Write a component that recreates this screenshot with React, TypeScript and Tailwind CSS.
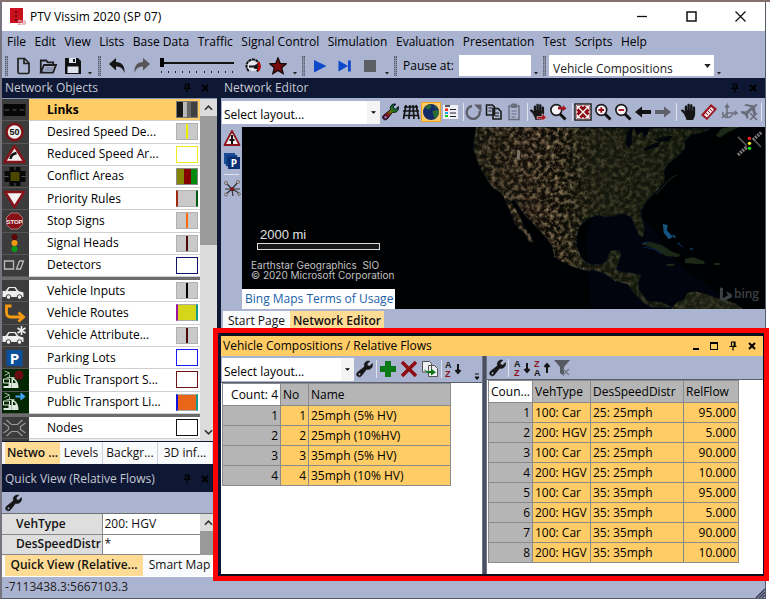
import React from "react";

type IconProps = { children: React.ReactNode; className?: string };

function Svg({ children, className = "size-[18px]" }: IconProps) {
  return (
    <svg viewBox="0 0 18 18" className={`shrink-0 ${className}`} fill="none" aria-hidden="true">
      {children}
    </svg>
  );
}

const wrenchPath =
  "M16.4 3.6 13.6 6.2 11.4 5.6 11.2 3.8 13.8 1.2C11.4.4 8.6 1.8 8.3 4.6c-.1.9 0 1.400.2 2.100L1.600 12.200c-1.300 1.100-1.200 2.900-.2 3.900s2.800 1 3.900-.2l5.300-6.700c2.600 1 6.700-.9 5.800-5.600Z";

function Wrench({ rainbow = false }: { rainbow?: boolean }) {
  return (
    <Svg>
      {rainbow && (
        <defs>
          <linearGradient id="rainbow" x1="0" y1="1" x2="1" y2="0">
            <stop offset="0" stopColor="#201060" />
            <stop offset=".3" stopColor="#8a1020" />
            <stop offset=".5" stopColor="#6a6a00" />
            <stop offset=".7" stopColor="#087a28" />
            <stop offset="1" stopColor="#102080" />
          </linearGradient>
        </defs>
      )}
      <path d={wrenchPath} fill={rainbow ? "url(#rainbow)" : "#151515"} stroke={rainbow ? "#111" : "#151515"} strokeWidth={rainbow ? 1 : 0.6} />
      <circle cx="3.500" cy="14.200" r="1" fill="#aab3d0" />
    </Svg>
  );
}

function IconButton({ label, children, active = false }: { label: string; children: React.ReactNode; active?: boolean }) {
  return (
    <button
      type="button"
      aria-label={label}
      className={
        active
          ? "flex size-[20px] shrink-0 items-center justify-center border border-[#e8a21c] bg-[#ffcc66]"
          : "flex size-[20px] shrink-0 items-center justify-center"
      }
    >
      {children}
    </button>
  );
}

function Grip() {
  return <span className="h-[20px] w-[3px] shrink-0 border-x border-dotted border-[#555a6c] bg-[#8c92a8]" />;
}

function Sep() {
  return <span className="h-[18px] w-px shrink-0 bg-[#dfe3ee]" />;
}

function Overflow() {
  return (
    <svg viewBox="0 0 6 20" className="h-[20px] w-[6px] shrink-0" aria-hidden="true">
      <path d="M1 16h4l-2 2.500Z" fill="#222" />
    </svg>
  );
}

function Pin() {
  return (
    <svg viewBox="0 0 8 10" className="h-[10px] w-[8px]" aria-hidden="true">
      <path d="M2 1h4v4.500M2.500 1v4.500M.5 5.500h7M4 5.500V9.500M5.200 1v4" fill="none" stroke="currentColor" strokeWidth="1.200" />
    </svg>
  );
}

function Cross() {
  return (
    <svg viewBox="0 0 8 8" className="size-[8px]" aria-hidden="true">
      <path d="m1 1 6 6M7 1 1 7" stroke="currentColor" strokeWidth="2" />
    </svg>
  );
}

function PanelHeader({ title, tall = false }: { title: string; tall?: boolean }) {
  return (
    <header
      className={
        tall
          ? "flex h-[26px] items-center bg-[#0e1733] pr-[8px] pl-[3px]"
          : "flex h-[20px] items-center bg-[#0e1733] pr-[8px] pl-[3px]"
      }
    >
      <h2 className="flex-1 truncate text-[12px] text-[#c5c9d4]">{title}</h2>
      <div className="flex items-center gap-[10px] text-black">
        <button type="button" aria-label="Pin panel"><Pin /></button>
        <button type="button" aria-label="Close panel"><Cross /></button>
      </div>
    </header>
  );
}

const menus = ["File", "Edit", "View", "Lists", "Base Data", "Traffic", "Signal Control", "Simulation", "Evaluation", "Presentation", "Test", "Scripts", "Help"];

function LayoutSelect({ id, className }: { id: string; className: string }) {
  return (
    <div className={`relative shrink-0 bg-white ${className}`}>
      <select id={id} aria-label="Select layout" className="h-full w-full appearance-none pb-[4px] pl-[2px] text-[12px] text-black outline-none">
        <option>Select layout...</option>
      </select>
      <span className="pointer-events-none absolute inset-y-0 right-0 flex w-[13px] items-center justify-center bg-[#f4f4f4]">
        <svg viewBox="0 0 6 3" className="h-[3px] w-[5px]" aria-hidden="true"><path d="M0 0h6L3 3Z" fill="#000" /></svg>
      </span>
    </div>
  );
}

function MainToolbar() {
  return (
    <div className="flex h-[25px] items-center bg-[#aab3d0] pl-[3px]">
      <Grip />
      <div className="ml-[5px] flex gap-[5px]">
        <IconButton label="New">
          <Svg><path d="M4 1.500h6.500L15 6v9a1.500 1.500 0 0 1-1.500 1.500h-8A1.500 1.500 0 0 1 4 15Z M10 2v4.500h4.500" stroke="#222" strokeWidth="1.700" /></Svg>
        </IconButton>
        <IconButton label="Open">
          <Svg><path d="M1.800 15.500v-12h5.400l1.500 1.800h5.500v2.500M1.800 15.500 5 8h12l-3 7.500Z" stroke="#1d1d1d" strokeWidth="1.800" /><path d="M4.200 15 7 10h8l-2 5Z" fill="#8f97b2" /></Svg>
        </IconButton>
        <IconButton label="Save">
          <Svg><path d="M1 1h13l3 3v13H1Z" fill="#101010" /><path d="M5 1h7v5H5ZM3.500 9.500h11V16h-11Z" fill="#dfe3ee" /><path d="M9 2h2v3H9Z" fill="#101010" /></Svg>
        </IconButton>
      </div>
      <span className="ml-[4px] flex gap-[5px]"><Overflow /><Grip /></span>
      <div className="ml-[6px] flex gap-[5px]">
        <IconButton label="Undo"><Svg><path d="M1 7 8 1v4c5.500 0 9 3.500 8.500 11C15 11.500 12.500 9.500 8 9.500v4Z" fill="#151515" /></Svg></IconButton>
        <IconButton label="Redo"><Svg><path d="M17 7 10 1v4C4.500 5 1 8.500 1.500 16 3 11.500 5.500 9.500 10 9.500v4Z" fill="#565656" /></Svg></IconButton>
      </div>
      <div className="ml-[8px] flex w-[74px] flex-col gap-[4px]">
        <input
          type="range"
          aria-label="Simulation speed"
          defaultValue={0}
          className="h-[9px] w-full appearance-none bg-[linear-gradient(#111,#111)] bg-[length:100%_2px] bg-center bg-no-repeat [&::-webkit-slider-thumb]:h-[9px] [&::-webkit-slider-thumb]:w-[4px] [&::-webkit-slider-thumb]:appearance-none [&::-webkit-slider-thumb]:bg-black"
        />
        <div className="flex justify-between px-[1px]">
          {Array.from({ length: 11 }, (_, i) => <span key={i} className="h-[2px] w-px bg-[#222]" />)}
        </div>
      </div>
      <div className="ml-[9px] flex gap-[5px]">
        <IconButton label="Maximum speed">
          <Svg><circle cx="9" cy="9" r="6.500" fill="#e6e6ee" stroke="#111" strokeWidth="2" strokeDasharray="3 .6" /><path d="M14 5.500a6.500 6.500 0 0 1 0 8" stroke="#b00" strokeWidth="2.600" /><path d="M5 9.500h5l3-1.500v3l-3-.2" stroke="#111" strokeWidth="1.800" /><path d="M5 14h8v3H5Z" fill="#aab3d0" /></Svg>
        </IconButton>
        <IconButton label="Favourites"><Svg><path d="m9 1 2.200 5.500 5.900.4-4.500 3.800 1.500 5.800L9 13.300l-5.100 3.200 1.500-5.800L.9 6.900l5.900-.4Z" fill="#7c0a0a" stroke="#1a0a0a" strokeWidth="1.400" /></Svg></IconButton>
      </div>
      <span className="ml-[4px] flex gap-[4px]"><Overflow /><Grip /></span>
      <div className="ml-[5px] flex gap-[5px]">
        <IconButton label="Continuous simulation"><Svg><path d="M3 3v12.500L15.500 9Z" fill="#0e49cc" /></Svg></IconButton>
        <IconButton label="Single step"><Svg><path d="M2.500 3.500v11L12 9Z" fill="#0e49cc" /><path d="M12 3.500h2.800v11H12Z" fill="#0e49cc" /></Svg></IconButton>
        <IconButton label="Stop"><Svg><path d="M3 3h12v12H3Z" fill="#5d5f66" /></Svg></IconButton>
      </div>
      <span className="ml-[4px] flex gap-[4px]"><Overflow /><Grip /></span>
      <label htmlFor="pause" className="ml-[6px] w-[56px] text-[12px] text-black">Pause at:</label>
      <input id="pause" type="text" className="h-[21px] w-[72px] bg-white px-1 text-[12px] outline-none" />
      <span className="ml-[2px] flex gap-[4px]"><Overflow /><Grip /></span>
      <div className="relative ml-[3px] h-[21px] w-[165px] bg-white">
        <select aria-label="List window" className="h-full w-full appearance-none pb-[4px] pl-[4px] text-[12px] text-[#222] outline-none">
          <option>Vehicle Compositions</option>
        </select>
        <svg viewBox="0 0 8 5" className="pointer-events-none absolute top-[9px] right-[3px] h-[4px] w-[7px]" aria-hidden="true"><path d="M0 0h8L4 5Z" fill="#222" /></svg>
      </div>
      <span className="ml-[2px] flex"><Overflow /></span>
    </div>
  );
}

const car = "M0 7h3l3-4h7l3 4 5 1.500V13H0Z";

const objectIcons: Record<string, React.ReactNode> = {
  links: <><path d="M1 4h22v12H1Z" fill="#070707" /><path d="M2 10h5M10 10h4M17 10h5" stroke="#555" /></>,
  speed: <><circle cx="12" cy="10" r="8" fill="#eee" stroke="#801015" strokeWidth="2.500" /><text x="12" y="13" textAnchor="middle" fontSize="9" fontWeight="700" fill="#111" fontFamily="Liberation Sans">50</text></>,
  reduced: <><path d="M12 2 22 18H2Z" fill="#eee" stroke="#851318" strokeWidth="2.500" strokeLinejoin="round" /><path d="M8 15c0-3 2-5 6-6" stroke="#111" strokeWidth="2.500" /></>,
  conflict: <><path d="M7 1h11v4h5v11h-5v4H7v-4H2V5h5Z" fill="#080808" /><path d="M8 6h9v9H8Z" fill="#4b4600" /><path d="M12.500 1v3M12.500 17v3M2 10.500h4M19 10.500h4" stroke="#555" /></>,
  priority: <path d="M2.500 3h19L12 18Z" fill="#f2f2f2" stroke="#851318" strokeWidth="2.500" strokeLinejoin="round" />,
  stop: <><path d="M8.500 2h7L20 6.500v7L15.500 18h-7L4 13.500v-7Z" fill="#8b1015" stroke="#c49a9a" strokeWidth=".7" /><text x="12" y="12.500" textAnchor="middle" fontSize="6" fontWeight="700" fill="#eee" fontFamily="Liberation Sans">STOP</text></>,
  signal: <><circle cx="12" cy="4" r="3" fill="#5a0606" /><circle cx="12" cy="10" r="3" fill="#f39a10" /><circle cx="12" cy="16" r="3" fill="#0b9a18" /></>,
  detector: <path d="M2 6h9v8H2ZM14 14l3-8h4l-3 8Z" stroke="#bbb" strokeWidth="1.300" />,
  input: <><path d={car} fill="#eee" transform="translate(0 3)" /><path d="M7 7h5l2 3H5Z" fill="#3c3c3c" /><circle cx="6" cy="16" r="2.300" fill="#eee" stroke="#3c3c3c" /><circle cx="17" cy="16" r="2.300" fill="#eee" stroke="#3c3c3c" /></>,
  route: <path d="M9 3H4v6c0 3 1 5 4 5h12M16 9.500l5 4.500-5 4.500" stroke="#f39a10" strokeWidth="2.800" />,
  attribute: <><path d={car} fill="#eee" transform="translate(0 4)" /><path d="M7 8h5l2 3H5Z" fill="#3c3c3c" /><circle cx="6" cy="17" r="2.300" fill="#eee" stroke="#3c3c3c" /><circle cx="17" cy="17" r="2.300" fill="#eee" stroke="#3c3c3c" /><path d="M19 1v9M15 3l8 5M23 3l-8 5" stroke="#eee" strokeWidth="1.600" /></>,
  parking: <><path d="M4 2h16v16H4Z" fill="#0b509c" /><text x="12" y="15.500" textAnchor="middle" fontSize="15" fontWeight="700" fill="#fff" fontFamily="Open Sans">P</text></>,
  ptstop: <><path d="m2 1 5 2-5 2.500M4 7.500h8M7 4.500v3" stroke="#a8bca8" /><path d="M3 8h8c3.500 2 5 5 5 10H9V8" fill="#dfe8df" /><path d="M1 9h6v4H1ZM10 9.500h1.500c1.500 1 2 2.500 2.300 4H10Z" fill="#032703" stroke="#dfe8df" /><path d="M1 18h8v-5H6v3H1Z" fill="#dfe8df" /><circle cx="16.500" cy="5" r="4.500" fill="#6b0b12" /></>,
  ptline: <><path d="m2 1 5 2-5 2.500M4 7.500h8M7 4.500v3" stroke="#a8bca8" /><path d="M3 8h8c3.500 2 5 5 5 10H9V8" fill="#dfe8df" /><path d="M1 9h6v4H1ZM10 9.500h1.500c1.500 1 2 2.500 2.300 4H10Z" fill="#032703" stroke="#dfe8df" /><path d="M1 18h8v-5H6v3H1Z" fill="#dfe8df" /><path d="M13 4.500h8M18 1.500l3.500 3L18 7.500" stroke="#42a5f5" strokeWidth="2" /></>,
  nodes: <path d="m4 2 5 4.500h6L20 2M4 18l5-4.500h6L20 18M1 5l5 3.500v3L1 15M23 5l-5 3.500v3l5 3.500" stroke="#999" strokeWidth="1.200" />,
};

type NetObject = { name: string; icon: string; swatch: string; mark?: string; bold?: boolean; green?: boolean };

const groups: { heightClass: string; items: NetObject[] }[] = [
  {
    heightClass: "h-[178px]",
    items: [
      { name: "Links", icon: "links", swatch: "bg-[linear-gradient(90deg,#181818_30%,#c0c0c0_30%,#b0b0b0_50%,#666_50%,#666_72%,#404040_72%)] border-[#777]", bold: true },
      { name: "Desired Speed De...", icon: "speed", swatch: "bg-[#c9c9c9] border-[#b0b0b0]", mark: "bg-[#eeee00]" },
      { name: "Reduced Speed Ar...", icon: "reduced", swatch: "bg-white border-[#f0ea20]" },
      { name: "Conflict Areas", icon: "conflict", swatch: "bg-[linear-gradient(90deg,#858500_34%,#850000_34%,#850000_68%,#008a10_68%)] border-[#888]" },
      { name: "Priority Rules", icon: "priority", swatch: "bg-[#c9c9c9] border-y-[#b0b0b0] border-l-2 border-l-[#a02810] border-r-2 border-r-[#005c10]" },
      { name: "Stop Signs", icon: "stop", swatch: "bg-[#c9c9c9] border-[#b0b0b0]", mark: "bg-[#ff6a10]" },
      { name: "Signal Heads", icon: "signal", swatch: "bg-[#c9c9c9] border-[#b0b0b0]", mark: "bg-[#4a0808]" },
      { name: "Detectors", icon: "detector", swatch: "bg-white border-[#10106a]" },
    ],
  },
  {
    heightClass: "h-[134px]",
    items: [
      { name: "Vehicle Inputs", icon: "input", swatch: "bg-[#c9c9c9] border-[#b0b0b0]", mark: "bg-black" },
      { name: "Vehicle Routes", icon: "route", swatch: "bg-[#d5d618] border-y-[#aaa] border-l-2 border-l-[#a010a0] border-r-2 border-r-[#109a90]" },
      { name: "Vehicle Attribute...", icon: "attribute", swatch: "bg-[#c9c9c9] border-[#b0b0b0]", mark: "bg-[#4a0808]" },
      { name: "Parking Lots", icon: "parking", swatch: "bg-white border-[#1818ff]" },
      { name: "Public Transport S...", icon: "ptstop", swatch: "bg-white border-[#6a1515]", green: true },
      { name: "Public Transport Li...", icon: "ptline", swatch: "bg-[#e96518] border-y-[#aaa] border-l-2 border-l-[#1010e0] border-r-2 border-r-[#109a90]", green: true },
    ],
  },
  { heightClass: "h-[22px]", items: [{ name: "Nodes", icon: "nodes", swatch: "bg-white border-[#111]" }] },
];

function Chevron({ down = false }: { down?: boolean }) {
  return (
    <svg viewBox="0 0 10 6" className="h-[6px] w-[9px]" fill="none" aria-hidden="true">
      <path d={down ? "m1 1 4 4 4-4" : "m1 5 4-4 4 4"} stroke="#333" strokeWidth="1.800" />
    </svg>
  );
}

function NetworkObjects() {
  return (
    <div className="flex border-t border-[#8a93ad] bg-[#dcdcdc]">
      <div className="min-w-0 flex-1 bg-[#3c3c3c]">
        {groups.map((group, g) => (
          <ul key={g} className={`grid auto-rows-fr ${group.heightClass} ${g > 0 ? "border-t-[3px] border-[#6c6c6c] box-content" : ""}`}>
            {group.items.map((item) => (
              <li key={item.name} className="min-h-0">
                <button type="button" className="flex h-full w-full text-left text-[12px] text-black">
                  <span className={`flex h-full w-[27px] shrink-0 items-center border-b border-[#575757] ${item.green ? "bg-[#032703]" : "bg-[#3c3c3c]"}`}>
                    <svg viewBox="0 0 24 20" className="h-[20px] w-[25px]" fill="none" aria-hidden="true">{objectIcons[item.icon]}</svg>
                  </span>
                  <span className={`flex h-full min-w-0 flex-1 items-center border-b border-[#cfcfcf] pr-[2px] pl-[18px] ${item.bold ? "bg-[#ffcc66] font-bold" : "bg-white"}`}>
                    <span className="flex-1 whitespace-nowrap">{item.name}</span>
                    <span className={`flex h-[17px] w-[22px] shrink-0 justify-center border ${item.swatch}`}>
                      {item.mark && <span className={`h-full w-[2px] ${item.mark}`} />}
                    </span>
                  </span>
                </button>
              </li>
            ))}
          </ul>
        ))}
        <div className="ml-[27px] h-[2px] bg-[#eee]" />
      </div>
      <div className="flex w-[17px] shrink-0 flex-col items-center justify-between pb-[6px]">
        <div className="flex w-full flex-col items-center">
          <button type="button" aria-label="Scroll up" className="flex h-[17px] items-center"><Chevron /></button>
          <div className="h-[129px] w-full bg-[#9b9b9b]" />
        </div>
        <button type="button" aria-label="Scroll down"><Chevron down /></button>
      </div>
    </div>
  );
}

function SideTab({ children, active = false, className }: { children: string; active?: boolean; className: string }) {
  return (
    <button
      type="button"
      className={
        active
          ? `h-full bg-[#ffdc96] text-[12px] font-semibold whitespace-nowrap ${className}`
          : `h-full border-r border-[#ccd2e2] bg-[#f9fafc] text-[12px] whitespace-nowrap ${className}`
      }
    >
      {children}
    </button>
  );
}

function LeftColumn() {
  return (
    <aside className="flex w-[215px] shrink-0 flex-col overflow-hidden">
      <PanelHeader title="Network Objects" />
      <NetworkObjects />
      <nav aria-label="Object panels" className="mt-px flex h-[22px] bg-[#f4f5f9] pl-[3px]">
        <SideTab active className="w-[55px]">Netwo ...</SideTab>
        <SideTab className="w-[43px]">Levels</SideTab>
        <SideTab className="w-[55px]">Backgr...</SideTab>
        <SideTab className="w-[55px]">3D inf...</SideTab>
      </nav>
      <div className="mt-[2px]"><PanelHeader title="Quick View (Relative Flows)" tall /></div>
      <div className="flex h-[21px] items-center bg-[#aab3d0] pl-[2px]">
        <IconButton label="Attribute selection"><Wrench /></IconButton>
      </div>
      <div className="flex border-t border-[#707070] bg-[#ddd]">
        <table className="flex-1 border-collapse text-[12px] leading-[18px]">
          <tbody>
            <tr>
              <th scope="row" className="w-[100px] border-r border-b border-[#888] bg-[#dedede] pl-[14px] text-left font-semibold">VehType</th>
              <td className="h-[20px] border-b border-[#888] bg-white pl-[2px]">200: HGV</td>
            </tr>
            <tr>
              <th scope="row" className="border-r border-b border-[#888] bg-[#dedede] pl-[14px] text-left font-semibold">DesSpeedDistr</th>
              <td className="h-[20px] border-b border-[#888] bg-white pl-[2px]">*</td>
            </tr>
          </tbody>
        </table>
        <div className="flex w-[17px] flex-col items-center">
          <button type="button" aria-label="Scroll up" className="flex h-[17px] items-center"><Chevron /></button>
          <div className="w-full flex-1 bg-[#999]" />
        </div>
      </div>
      <nav aria-label="View panels" className="flex min-h-[21px] flex-1 bg-[#f9fafc] pl-[3px]">
        <SideTab active className="w-[138px]">Quick View (Relative...</SideTab>
        <SideTab className="w-[74px]">Smart Map</SideTab>
      </nav>
    </aside>
  );
}

function Lens({ children }: { children: React.ReactNode }) {
  return (
    <Svg>
      <path d="m11 11 5.500 5.500" stroke="#111" strokeWidth="3" />
      <circle cx="7.300" cy="7" r="5.400" fill="#f5f5fa" stroke="#181818" strokeWidth="1.600" />
      {children}
    </Svg>
  );
}

const handPath = "M4 11 .8 7.500c1-1.500 2.500-1 4 .9V3.500c0-1.500 2.200-1.500 2.300 0V7h.3V2c0-1.700 2.400-1.700 2.400 0v5h.3V2.500c0-1.600 2.400-1.600 2.400 0V8h.3V4.500c0-1.500 2.300-1.500 2.300 0V11c0 3-1.500 4-2 6H6.500C6 14.500 5 13.500 4 11Z";

function EditorToolbar() {
  return (
    <div className="flex h-[29px] items-center overflow-hidden bg-[#aab3d0] pb-px pl-px">
      <LayoutSelect id="editor-layout" className="h-[23px] w-[158px]" />
      <div className="ml-[1px] flex items-center">
        <IconButton label="Edit graphic parameters"><Wrench rainbow /></IconButton>
        <IconButton label="Wireframe"><Svg><path d="M4 2 1.500 16M8 2 7 16M11 2l1 14M14 2l3 14M2 4h14M1 8h16M1 12.500h16" stroke="#151515" strokeWidth="1.700" /></Svg></IconButton>
        <IconButton label="Background map" active><Svg><circle cx="9" cy="9" r="8" fill="#122a66" /><path d="M7 1.500c4 .5 2 3 1 4-1 2-4 0-5-1Zm3 7 5-2 2 2c-.2 4-3 6-4 7-2-2-1-4-3-7Zm2-6 3 2-2 1Z" fill="#296b35" /></Svg></IconButton>
        <IconButton label="Legend"><Svg><path d="M1 2h15v14H1Z" fill="#eef0f6" /><path d="M3 3h5" stroke="#222" strokeWidth="1.500" /><path d="M3 5.500h3v2.500H3Z" fill="#f02a10" /><path d="M3 9h3v2H3Z" fill="#10a0f0" /><path d="M3 12h3v2H3Z" fill="#19c41e" /><path d="M8 6.500h6M8 10h6M8 13.500h6" stroke="#222" strokeWidth="1.200" /></Svg></IconButton>
      </div>
      <span className="ml-[2px] flex items-center">
        <Sep />
        <IconButton label="Rotate"><Svg><path d="M7 3A6.500 6.500 0 1 0 14.500 8" stroke="#5c5f68" strokeWidth="2.400" /><path d="M9 1.500h7.500V9Z" fill="#5c5f68" /></Svg></IconButton>
        <IconButton label="Copy"><Svg><path d="M1.500 2h6l2 2v8h-8ZM8 5.500h5l3 3V16H8Z" fill="#aab3d0" stroke="#1b1b1b" strokeWidth="1.600" /><path d="M3.500 5h4M3.500 8h3M10 10h4M10 13h4" stroke="#1b1b1b" /></Svg></IconButton>
        <IconButton label="Paste"><Svg><path d="M4 3h10v13.500H4Z" stroke="#6b6f7c" strokeWidth="1.500" /><path d="M6.500 1h5v3.500h-5ZM6.500 8h5M6.500 11h5M6.500 14h4" fill="#6b6f7c" stroke="#6b6f7c" /></Svg></IconButton>
      </span>
      <span className="ml-[3px] flex items-center">
        <Sep />
        <IconButton label="Pan object"><Svg><path d={handPath} fill="#181818" /><path d="M8 13.500h5v-3l4.500 4-4.500 3.500v-2H8Z" fill="#a51520" stroke="#e0d4dc" strokeWidth=".6" /></Svg></IconButton>
        <IconButton label="Zoom to object"><Lens><path d="M9 4h5V2l3.500 3.500L14 8V6.500H9Z" fill="#a51520" /></Lens></IconButton>
      </span>
      <span className="ml-[4px] flex items-center">
        <Sep />
        <IconButton label="Show entire network"><Svg><path d="M1 1h16v16H1Z" fill="#fff" stroke="#222" strokeWidth="1.500" /><path d="M2.500 2.500h13v13h-13Z" fill="#86090f" /><path d="m5 5 8 8M13 5l-8 8" stroke="#fff" strokeWidth="1.300" /><path d="M3 3h4L3 7ZM15 3h-4l4 4ZM3 15h4l-4-4ZM15 15h-4l4-4Z" fill="#fff" /><path d="M9 2v2M9 14v2M2 9h2M14 9h2" stroke="#fff" strokeWidth="1.200" /></Svg></IconButton>
        <IconButton label="Zoom in"><Lens><path d="M4.500 7h5.600M7.300 4.200v5.600" stroke="#a00c14" strokeWidth="1.800" /></Lens></IconButton>
        <IconButton label="Zoom out"><Lens><path d="M4.500 7h5.600" stroke="#a00c14" strokeWidth="1.800" /></Lens></IconButton>
        <IconButton label="Previous view"><Svg><path d="M1 9 8 3.500V7h9v4H8v3.500Z" fill="#111" /></Svg></IconButton>
        <IconButton label="Next view"><Svg><path d="M17 9 10 3.500V7H1v4h9v3.500Z" fill="#5d606a" /></Svg></IconButton>
      </span>
      <span className="ml-[3px] flex items-center">
        <Sep />
        <span className="ml-[2px] flex"><IconButton label="Pan"><Svg><path d={handPath} fill="#141414" /></Svg></IconButton></span>
        <IconButton label="Measure"><Svg><path d="m1 12 10-11 6 5L7 17Z" fill="#9b1520" /><path d="m4 12 7-8 3 2.500-7 8Z" fill="#f0e6ea" /><path d="m6 10 2 2M8 8l2 2M10 6l2 2" stroke="#9b1520" /></Svg></IconButton>
        <IconButton label="3D mode"><Svg><path d="M7 15V2L5 4.500M7 2l2 2.500M7 10h10l-2.500-2M17 10l-2.500 2M7 10l-5 5M3 9c-2 6 9 8 10 1" stroke="#6d717d" strokeWidth="1.600" /></Svg></IconButton>
        <IconButton label="Camera flight"><Svg><path d="m1 8 5 .5L11 4 4 2.500 6 1l8 1.500L16 1c1 0 1.500.5 1 1.500l-2 2L16 12l-2 1-2-6-4 4 .5 4-1.500 1-2-4-4-2Z" fill="#686c78" /><path d="m10 10 7 7M17 10l-7 7" stroke="#686c78" strokeWidth="1.500" /></Svg></IconButton>
        <span className="ml-[2px] flex"><Sep /></span>
      </span>
    </div>
  );
}

function MapPicture() {
  return (
    <svg viewBox="242 127 522 182" preserveAspectRatio="xMaxYMid slice" className="absolute inset-0 h-full w-full" aria-hidden="true">
      <defs>
        <filter id="relief" x="0" y="0" width="1" height="1" colorInterpolationFilters="sRGB">
          <feTurbulence type="fractalNoise" baseFrequency=".22" numOctaves="4" seed="8" />
          <feColorMatrix values="1.700 0 0 0 -.66  1.500 0 0 0 -.6  1.200 0 0 0 -.5  0 0 0 0 .7" />
          <feComposite in2="SourceGraphic" operator="in" />
        </filter>
        <linearGradient id="land" x1="0" x2="1">
          <stop offset="0" stopColor="#1b1e12" />
          <stop offset=".25" stopColor="#352b1f" />
          <stop offset=".42" stopColor="#1e2213" />
          <stop offset="1" stopColor="#131b0d" />
        </linearGradient>
        <linearGradient id="dry" x1="0" x2="1">
          <stop offset="0" stopColor="#fff" stopOpacity=".6" />
          <stop offset=".3" stopColor="#fff" />
          <stop offset=".42" stopColor="#fff" stopOpacity=".4" />
          <stop offset="1" stopColor="#fff" stopOpacity=".25" />
        </linearGradient>
        <mask id="drymask"><path d="M470 127h294v182H470Z" fill="url(#dry)" /></mask>
        <path
          id="coast"
          d="M476 127l-2 12-1 9 3 11 5 11 5 8 5 9 6 3 6 6 4 10 4 9 3 8 5 6 5 4 5 9 4 0-4-8-5-6-4-10-5-9-5-8 4-1 5 8 7 9 10 10 10 11 6 9 2 10 10 6 12 5 11 3 6-1 12 4 9 7 13 3 8 11 8 8 9 4 19 0-10-5-14-1-9-11 0-9 2-6-9-2-11-1-5-3 3-7 2-8-1-4-9 1-4 9-5 4-9 1-8-3-5-8-3-9 0-9 3-10 9-8 10-3 7 2 8-1 5-2 7 0 6 4 4 10 4 8 3 1 2-8-3-10-1-8 6-10 12-12 6-8-1-9 3-7 9-7 9-9 0-8 6-6 14-3 6-3Z"
        />
        <path id="south" d="m670 309 6-7 8-3 2-6 8-2 8 2 9 3 11 3 12 4 9 6Z" />
        <path id="islands" d="m640 244 10-2 11 3 9 6 10 4-3 2-12-1-9-6-9-4ZM684 259l8-2 11 4 1 3-8 0-12-1ZM665 264l8 0 1 2-7 0ZM713 263l6 0v2h-6ZM715 136l5-7 9-2h10l-13 6-7 5Z" />
      </defs>
      <path d="M242 127h522v182H242Z" fill="#000103" />
      <path d="M585 245c0-50 60-40 75-5s70 50 65 69H590Z" fill="#01040c" />
      <use href="#coast" fill="url(#land)" stroke="#08141a" />
      <use href="#south" fill="#202616" />
      <use href="#islands" fill="#1b2817" />
      <g mask="url(#drymask)">
        <g filter="url(#relief)">
          <use href="#coast" fill="#fff" />
          <use href="#south" fill="#fff" />
        </g>
      </g>
      <path d="M517 150l3 1-1 9-3-1Z" fill="#7b7668" />
      <path d="m497 181 8 8 8 4 18 12 12 4M523 173l16 8 12-6M541 205l14 24 13 20 18 14" stroke="#66513a" strokeWidth="1.200" strokeDasharray="2 3" opacity=".5" fill="none" />
      <path d="M626 132l5-5h2l-2 7v10l-3 5-3-5Zm7-5h16l-2 7-3 4-3-6-5 4Zm9 23 8-5 10-3-3 5-13 4Zm12-10 9-3 9-1-3 5-11 1Z" fill="#01040a" />
      <path d="M609 210c-2-8 6-16 4-22l4-9M579 164c8 3 14 0 22 5M655 195c8-8 12-17 21-20M651 177l16-12" stroke="#283020" opacity=".7" fill="none" />
      <path d="m662 224 5 1-1 5 6 7-4 2-5-6Zm10 10 4 4-4-1Zm5 8 3 3-3-1Zm-35 1 8-2-8 3Zm47 5 4 1-3 1Z" fill="#145480" />
      <path d="m643 247 10 2 8 5M678 244l4 3" stroke="#0a2450" fill="none" />
      <path d="m737 137 8 8v5M760 147l-7-7" stroke="#555" fill="none" strokeWidth="1.500" />
      <path d="m737 155 9-8M752 140l9-8" stroke="#777" strokeWidth="3.500" strokeDasharray="2 1" />
      <circle cx="748.500" cy="138.500" r="1.700" fill="#f22" />
      <circle cx="748.500" cy="143.500" r="1.700" fill="#ee2" />
      <circle cx="748.500" cy="148.500" r="1.700" fill="#1e1" />
      <path d="M719 287l3 1v10l5-3-2-4 6 3v3l-8 4-4-2Z" fill="#3d4044" />
    </svg>
  );
}

function NetworkEditor() {
  return (
    <section>
      <PanelHeader title="Network Editor" />
      <EditorToolbar />
      <div className="flex h-[182px]">
        <div className="flex w-[21px] shrink-0 flex-col items-center gap-[3px] bg-[#aab3d0] pt-px">
          <IconButton label="Warnings"><Svg><path d="M9 2 16.500 16h-15Z" fill="#f2f2f2" stroke="#8c151b" strokeWidth="1.800" strokeLinejoin="round" /><path d="M9 6v9M6.500 11h5" stroke="#111" strokeWidth="2" /></Svg></IconButton>
          <IconButton label="Parking display"><Svg><path d="M1 1h11v11H1Z" fill="#174a96" /><path d="M3 3h11v11H3Z" fill="#0d3a80" stroke="#315ea5" strokeWidth=".5" /><path d="M5 5h12v12H5Z" fill="#0a2f75" /><text x="11" y="15" textAnchor="middle" fontSize="10" fontWeight="700" fill="#fff" fontFamily="Open Sans">P</text></Svg></IconButton>
          <span className="h-px w-[15px] bg-[#dfe3ee]" />
          <IconButton label="Network graph"><Svg><path d="m9 10-6-6M9 10l6-7M9 10l7 4M9 10l-6 5M9 10h8M9 10l1 7M9 10H2" stroke="#333" strokeWidth="1.200" /><g fill="#c8c8cc" stroke="#666"><circle cx="3" cy="4" r="1.500" /><circle cx="15" cy="3" r="1.500" /><circle cx="16" cy="15" r="1.300" /><circle cx="3" cy="15.500" r="1.500" /></g><circle cx="9" cy="10" r="1.800" fill="#8a1015" /></Svg></IconButton>
        </div>
        <div className="relative flex min-w-0 flex-1 flex-col justify-end overflow-hidden bg-black">
          <MapPicture />
          <div className="relative flex flex-1 flex-col justify-end pb-[9px] pl-[9px] font-['Liberation_Sans',sans-serif] text-[#e2e2e2]">
            <p className="pl-[9px] text-[13px] leading-[17px]">2000 mi</p>
            <div className="mb-[10px] ml-[6px] h-[7px] w-[123px] border border-[#ddd] bg-[#181818]" />
            <p className="font-['Inter',sans-serif] text-[10px] leading-[10px] whitespace-pre text-[#c2c2c2]">{"Earthstar Geographics  SIO\n© 2020 Microsoft Corporation"}</p>
          </div>
          <a href="#terms" className="relative flex h-[20px] w-[153px] items-center bg-white pl-[3px] text-[12px] whitespace-nowrap text-[#1b5fa8]">Bing Maps Terms of Usage</a>
          <span className="absolute right-[6px] bottom-[5px] font-['Open_Sans',sans-serif] text-[12px] leading-[20px] font-semibold text-[#3d4044]">bing</span>
        </div>
      </div>
      <nav aria-label="Editor tabs" className="flex h-[19px] bg-[#aab3d0] pt-[2px] pl-[2px] text-[12px] leading-[19px]">
        <button type="button" className="flex w-[67px] justify-center bg-[#fafbfd] whitespace-nowrap">Start Page</button>
        <button type="button" className="flex w-[94px] justify-center bg-[#ffdc96] font-semibold whitespace-nowrap">Network Editor</button>
      </nav>
    </section>
  );
}

function SortIcon({ up = false }: { up?: boolean }) {
  return (
    <Svg>
      <g fontFamily="Liberation Sans" fontSize="9" fontWeight="700">
        <text x="1" y="8" fill={up ? "#8c1018" : "#151515"}>{up ? "Z" : "A"}</text>
        <text x="1" y="17" fill={up ? "#151515" : "#8c1018"}>{up ? "A" : "Z"}</text>
      </g>
      <path d={up ? "M14 14V6M11.500 8 14 5l2.500 3" : "M14 4v8M11.500 10l2.500 3 2.500-3"} stroke="#151515" strokeWidth="2" />
    </Svg>
  );
}

const compositions = ["25mph (5% HV)", "25mph (10%HV)", "35mph (5% HV)", "35mph (10% HV)"];
const flows = [
  ["100: Car", "25: 25mph", "95.000"],
  ["200: HGV", "25: 25mph", "5.000"],
  ["100: Car", "25: 25mph", "90.000"],
  ["200: HGV", "25: 25mph", "10.000"],
  ["100: Car", "35: 35mph", "95.000"],
  ["200: HGV", "35: 35mph", "5.000"],
  ["100: Car", "35: 35mph", "90.000"],
  ["200: HGV", "35: 35mph", "10.000"],
];

const cell = "h-[20px] border border-[#8a8a8a] bg-[#ffcc66] px-[2px] whitespace-nowrap";
const indexCell = "h-[20px] border border-[#8a8a8a] bg-[#b5b5b5] px-[2px] text-right font-normal";
const headCell = "h-[22px] border border-[#8a8a8a] bg-[#b5b5b5] px-[2px] text-left font-normal";
const countCell = "h-[22px] border border-[#8a8a8a] bg-white px-[2px] text-right font-normal whitespace-nowrap";

function Compositions() {
  return (
    <section className="relative flex flex-1 flex-col bg-[#0b0f1e] pt-[8px] pr-[2px] pb-[2px]">
      <header className="flex h-[20px] items-center bg-[#ffcc66] pr-[7px] pl-[2px]">
        <h2 className="flex-1 text-[12px] text-black">Vehicle Compositions / Relative Flows</h2>
        <div className="flex items-center gap-[11px] text-black">
          <button type="button" aria-label="Minimize"><span className="mt-[5px] block h-[2px] w-[6px] bg-black" /></button>
          <button type="button" aria-label="Maximize"><span className="block size-[8px] border border-t-2 border-black" /></button>
          <button type="button" aria-label="Pin"><Pin /></button>
          <button type="button" aria-label="Close"><Cross /></button>
        </div>
      </header>
      <div className="flex flex-1 bg-white">
        <div className="w-[261px] shrink-0">
          <div className="flex h-[27px] items-center border-b border-[#5a5f70] bg-[#aab3d0] pl-px">
            <LayoutSelect id="list-layout" className="h-[23px] w-[132px]" />
            <span className="ml-[1px] flex items-center gap-[1px]">
              <IconButton label="Attribute selection"><Wrench /></IconButton>
              <Sep />
              <IconButton label="Add"><Svg><path d="M6 1h6v5h5v6h-5v5H6v-5H1V6h5Z" fill="#0b7a14" /></Svg></IconButton>
              <IconButton label="Delete"><Svg><path d="m2 2 14 14M16 2 2 16" stroke="#8e0b10" strokeWidth="3.500" /></Svg></IconButton>
              <IconButton label="Duplicate"><Svg><path d="M1.500 1.500h7l2 2V12h-9ZM7.500 5.500h6l3 3v8h-9Z" fill="#eef0f4" stroke="#555" /><path d="M3 9c3 3 4 2 7 2V8.500l5 3.700-5 3.300V13C7 14 4 12 3 9Z" fill="#0b7a14" /></Svg></IconButton>
              <Sep />
              <IconButton label="Sort ascending"><SortIcon /></IconButton>
            </span>
            <svg viewBox="0 0 6 20" className="mt-[4px] ml-auto h-[20px] w-[6px]" aria-hidden="true"><path d="M1 13h4M1 16h4l-2 2.500Z" fill="#111" stroke="#111" /></svg>
            <span className="w-[2px]" />
          </div>
          <table className="ml-px w-[229px] table-fixed border-collapse text-[12px] leading-[17px] text-black">
            <thead>
              <tr>
                <th className={`${countCell} w-[58px]`}>Count: 4</th>
                <th className={`${headCell} w-[28px]`}>No</th>
                <th className={headCell}>Name</th>
              </tr>
            </thead>
            <tbody>
              {compositions.map((name, i) => (
                <tr key={name}>
                  <th scope="row" className={indexCell}>{i + 1}</th>
                  <td className={`${cell} text-right`}>{i + 1}</td>
                  <td className={cell}>{name}</td>
                </tr>
              ))}
            </tbody>
          </table>
        </div>
        <div className="w-[5px] shrink-0 border-x border-[#6e7386] bg-[#4b5060]" />
        <div className="min-w-0 flex-1">
          <div className="flex h-[24px] items-center border-b border-[#5a5f70] bg-[#aab3d0] pl-px">
            <IconButton label="Attribute selection"><Wrench /></IconButton>
            <Sep />
            <span className="ml-[3px] flex">
              <IconButton label="Sort ascending"><SortIcon /></IconButton>
              <IconButton label="Sort descending"><SortIcon up /></IconButton>
              <IconButton label="Remove filter"><Svg><path d="M1 1h16l-6 7v9l-4-3V8Z" fill="#555962" /><path d="m10 10 6 6M16 10l-6 6" stroke="#777c8a" strokeWidth="1.500" /></Svg></IconButton>
            </span>
          </div>
          <table className="ml-px w-[251px] table-fixed border-collapse text-[12px] leading-[17px] text-black">
            <thead>
              <tr>
                <th className={`${countCell} w-[44px]`}>Coun...</th>
                <th className={`${headCell} w-[58px]`}>VehType</th>
                <th className={`${headCell} w-[93px]`}>DesSpeedDistr</th>
                <th className={headCell}>RelFlow</th>
              </tr>
            </thead>
            <tbody>
              {flows.map(([type, speed, flow], i) => (
                <tr key={i}>
                  <th scope="row" className={indexCell}>{i + 1}</th>
                  <td className={cell}>{type}</td>
                  <td className={cell}>{speed}</td>
                  <td className={`${cell} text-right`}>{flow}</td>
                </tr>
              ))}
            </tbody>
          </table>
        </div>
      </div>
      <div className="pointer-events-none absolute top-0 -right-[4px] -bottom-[5px] -left-[8px] z-10 border-[5px] border-[#ff0000]" />
    </section>
  );
}

export default function App() {
  return (
    <div className="flex min-h-screen flex-col overflow-hidden border-t-2 border-[#85706e] bg-white pr-[4px] pb-[2px] font-['Open_Sans','Noto_Sans',sans-serif] text-[#111]">
      <div className="flex flex-1 flex-col border-r border-b border-l-2 border-r-[#555a68] border-b-[#555a68] border-l-[#777480]">
        <header className="flex h-[29px] items-center bg-white pl-[7px]">
          <svg viewBox="0 0 18 18" className="size-[18px]" aria-hidden="true">
            <path d="M1 0h13v15H1Z" fill="#c9101c" />
            <path d="M7 3v2M7 7v2M7 11v2" stroke="#6d0810" strokeWidth="2" />
            <text x="9" y="17" fontSize="7" fontWeight="700" fontFamily="Liberation Sans" fill="#c9101c" stroke="#fff" strokeWidth=".3">20</text>
          </svg>
          <h1 className="ml-[3px] flex-1 text-[12px] text-black">PTV Vissim 2020 (SP 07)</h1>
          <div className="flex gap-[38px] pr-[19px]">
            <button type="button" aria-label="Minimize window"><svg viewBox="0 0 11 11" className="size-[11px]" aria-hidden="true"><path d="M0 5.500h10" stroke="#111" strokeWidth="1.300" /></svg></button>
            <button type="button" aria-label="Maximize window"><svg viewBox="0 0 11 11" className="size-[11px]" aria-hidden="true"><path d="M1 1h9v9H1Z" fill="none" stroke="#111" strokeWidth="1.500" /></svg></button>
            <button type="button" aria-label="Close window"><svg viewBox="0 0 11 11" className="size-[11px]" aria-hidden="true"><path d="m.5.5 10 10M10.500.5l-10 10" stroke="#111" strokeWidth="1.300" /></svg></button>
          </div>
        </header>
        <nav aria-label="Main menu" className="h-[22px] bg-[#aab3d0] pl-[5px] text-[12px] text-black">
          <div className="flex h-full max-w-[640px] items-center justify-between pb-px">
            {menus.map((m) => <button key={m} type="button" className="whitespace-nowrap">{m}</button>)}
          </div>
        </nav>
        <MainToolbar />
        <main className="flex flex-1 gap-[4px] bg-[#0e1733]">
          <LeftColumn />
          <div className="flex min-w-0 flex-1 flex-col">
            <NetworkEditor />
            <Compositions />
          </div>
        </main>
        <footer className="mt-px flex h-[21px] items-center justify-between bg-[#aab3d0] pl-[3px] text-[12px] text-[#222]">
          <span>-7113438.3:5667103.3</span>
          <svg viewBox="0 0 10 10" className="size-[10px] self-end" aria-hidden="true"><path d="M1 10 10 1M4 10l6-6M7 10l3-3" stroke="#333a50" strokeWidth="1.500" /></svg>
        </footer>
      </div>
    </div>
  );
}
